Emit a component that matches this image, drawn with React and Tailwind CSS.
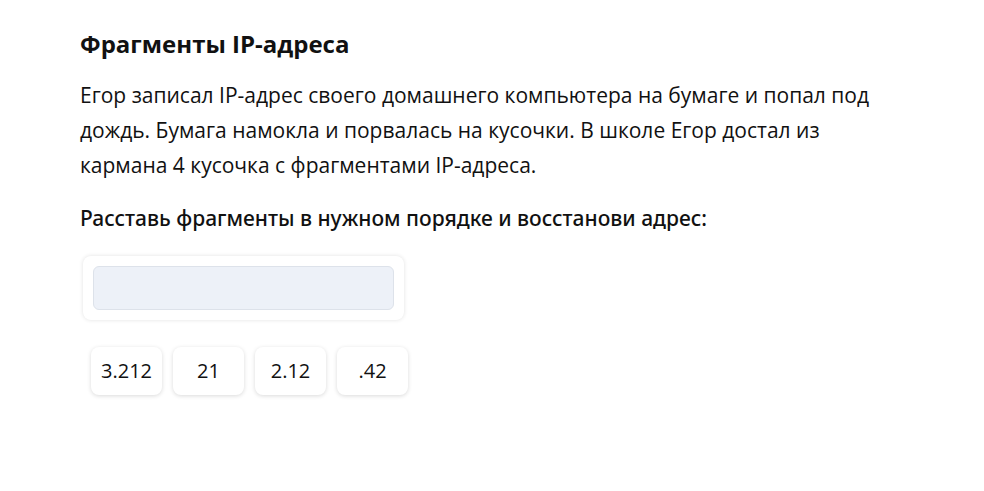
import React from "react";

const fragments = ["3.212", "21", "2.12", ".42"];

export default function App() {
  return (
    <div className="min-h-screen bg-white font-['Open_Sans',sans-serif] text-[#111]">
      <div className="pl-[80px] pt-[28px] w-[880px]">
        <h1 className="text-[24px] font-bold leading-[32px]">Фрагменты IP-адреса</h1>
        <p className="mt-[18px] text-[21px] leading-[35px]">
          Егор записал IP-адрес своего домашнего компьютера на бумаге и попал под дождь. Бумага намокла и порвалась на кусочки. В школе Егор достал из кармана 4 кусочка с фрагментами IP-адреса.
        </p>
        <p className="mt-[20px] font-['Noto_Sans',sans-serif] text-[21px] font-medium leading-[30px] text-[#111]">
          Расставь фрагменты в нужном порядке и восстанови адрес:
        </p>
        <div className="ml-[3px] mt-[23px] w-[321px] rounded-[8px] bg-white p-[10px] shadow-[0_0_4px_rgba(0,0,0,0.12)]">
          <div className="h-[44px] rounded-[6px] border border-[#dde2ea] bg-[#edf1f8]" />
        </div>
        <div className="ml-[11px] mt-[27px] flex gap-[11px]">
          {fragments.map((f) => (
            <div
              key={f}
              className="flex h-[48px] w-[71px] items-center justify-center rounded-[8px] bg-white text-[20px] shadow-[0_1px_4px_rgba(0,0,0,0.15)]"
            >
              {f}
            </div>
          ))}
        </div>
      </div>
    </div>
  );
}
